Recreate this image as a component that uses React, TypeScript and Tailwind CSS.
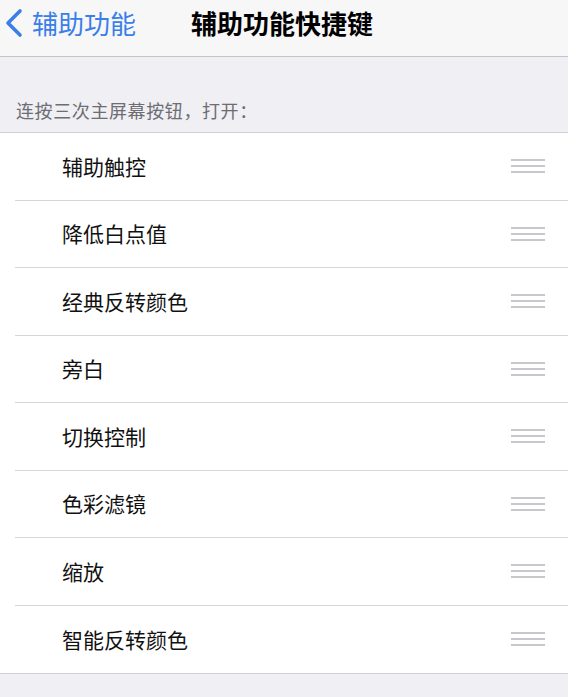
const items = ['辅助触控', '降低白点值', '经典反转颜色', '旁白', '切换控制', '色彩滤镜', '缩放', '智能反转颜色'];

function ReorderHandle() {
  return (
    <div className="flex flex-col gap-[4px] w-[34px]">
      <div className="h-[2px] bg-[#c7c7cc]" />
      <div className="h-[2px] bg-[#c7c7cc]" />
      <div className="h-[2px] bg-[#c7c7cc]" />
    </div>
  );
}

function BackChevron() {
  return (
    <svg width="22" height="30" viewBox="0 0 22 30" fill="none">
      <polyline
        points="17,3 5,15 17,27"
        stroke="#3a7ee8"
        strokeWidth="3.6"
        strokeLinecap="round"
        strokeLinejoin="round"
      />
    </svg>
  );
}

export default function App() {
  return (
    <div
      className="flex w-[580px] h-[697px] bg-white overflow-hidden"
      style={{ fontFamily: '"Noto Sans CJK SC", "Noto Sans", sans-serif' }}
    >
      <div className="w-[568px] flex flex-col bg-[#efeff4]">
        {/* Navigation bar */}
        <div className="relative h-[57px] shrink-0 bg-[#f7f7f8] border-b border-[#c4c4c8]">
          <div className="h-[46px] flex items-center text-[#3a7ee8] pl-[3px]">
            <BackChevron />
            <span className="text-[26px] leading-none ml-[7px]">辅助功能</span>
          </div>
          <div className="absolute left-0 right-0 top-0 h-[46px] flex items-center justify-center pointer-events-none">
            <span className="text-[26px] font-semibold text-black leading-none ml-[-4px]">辅助功能快捷键</span>
          </div>
        </div>

        {/* Section header */}
        <div className="h-[76px] shrink-0 flex items-end pl-[16px] pb-[13px] border-b border-[#d0d0d4]">
          <span className="text-[18px] text-[#6d6d72] leading-none tracking-[0.6px]">连按三次主屏幕按钮，打开：</span>
        </div>

        {/* List */}
        <div className="bg-white shrink-0 border-b border-[#d0d0d4]">
          {items.map((item, i) => (
            <div key={item} className="pl-[15px]">
              <div
                className={
                  'h-[67.5px] flex items-center justify-between pr-[23px] ' +
                  (i < items.length - 1 ? 'border-b border-[#d6d6da]' : '')
                }
              >
                <span className="pl-[47px] text-[21px] text-[#111] leading-none">{item}</span>
                <ReorderHandle />
              </div>
            </div>
          ))}
        </div>

        <div className="flex-1" />
      </div>
    </div>
  );
}
